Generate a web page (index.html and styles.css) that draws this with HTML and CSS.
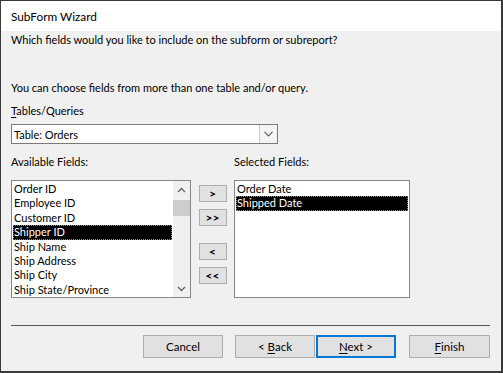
FILE: index.html
```html
<!DOCTYPE html>
<html lang="en">
<head>
<meta charset="UTF-8">
<meta name="viewport" content="width=device-width, initial-scale=1.0">
<title>SubForm Wizard</title>
<link rel="stylesheet" href="styles.css">
</head>
<body>

<div class="window">
    <div class="titlebar">SubForm Wizard</div>
    <div class="content">
        <p class="question">Which fields would you like to include on the subform or subreport?</p>
        <p class="hint">You can choose fields from more than one table and/or query.</p>

        <div class="field-label"><u>T</u>ables/Queries</div>
        <div class="combo">
            <span class="combo-text">Table: Orders</span>
            <span class="combo-btn">
                <svg width="9" height="6" viewBox="0 0 9 6"><path d="M0.5 0.8 L4.5 4.8 L8.5 0.8" fill="none" stroke="#606060" stroke-width="1.2"/></svg>
            </span>
        </div>

        <div class="pickers">
            <div class="column column-available">
                <div class="field-label">Available Fields:</div>
                <div class="listbox">
                    <div class="items">
                        <div class="item">Order ID</div>
                        <div class="item">Employee ID</div>
                        <div class="item">Customer ID</div>
                        <div class="item selected">Shipper ID</div>
                        <div class="item">Ship Name</div>
                        <div class="item">Ship Address</div>
                        <div class="item">Ship City</div>
                        <div class="item">Ship State/Province</div>
                    </div>
                    <div class="scrollbar">
                        <span class="arrow">
                            <svg width="9" height="6" viewBox="0 0 9 6"><path d="M1 5 L4.5 1.5 L8 5" fill="none" stroke="#606060" stroke-width="1.3"/></svg>
                        </span>
                        <span class="track"><span class="thumb"></span></span>
                        <span class="arrow">
                            <svg width="9" height="6" viewBox="0 0 9 6"><path d="M1 1 L4.5 4.5 L8 1" fill="none" stroke="#606060" stroke-width="1.3"/></svg>
                        </span>
                    </div>
                </div>
            </div>

            <div class="movers">
                <button class="btn-small">&gt;</button>
                <button class="btn-small">&gt;&gt;</button>
                <button class="btn-small gap">&lt;</button>
                <button class="btn-small">&lt;&lt;</button>
            </div>

            <div class="column column-selected">
                <div class="field-label">Selected Fields:</div>
                <div class="listbox">
                    <div class="items">
                        <div class="item">Order Date</div>
                        <div class="item selected">Shipped Date</div>
                    </div>
                </div>
            </div>
        </div>

        <div class="separator"></div>

        <div class="actions">
            <button class="btn">Cancel</button>
            <button class="btn back">&lt; <u>B</u>ack</button>
            <button class="btn default"><u>N</u>ext &gt;</button>
            <button class="btn finish"><u>F</u>inish</button>
        </div>
    </div>
</div>

</body>
</html>
```

FILE: styles.css
```css
body {
    margin: 0;
    font-family: Lato, "Noto Sans", sans-serif;
    font-size: 11px;
    color: #000;
}
.window {
    width: 503px;
    height: 373px;
    box-sizing: border-box;
    border: 1px solid #3a3a3a;
    border-right-width: 2px;
    border-bottom-width: 2px;
    background-color: #f0f0f0;
    display: flex;
    flex-direction: column;
}
.titlebar {
    height: 30px;
    background-color: #fff;
    padding-left: 10px;
    line-height: 31px;
    font-size: 11.8px;
}
.content {
    padding: 1px 11px 0 10px;
    display: flex;
    flex-direction: column;
}
p {
    margin: 0;
    line-height: 16px;
}
.question {
    margin-bottom: 32px;
}
.hint {
    margin-bottom: 7px;
}
.field-label {
    line-height: 16px;
}
u {
    text-decoration-thickness: 1px;
    text-underline-offset: 2px;
}
.combo {
    margin-top: 5px;
    width: 267px;
    height: 20px;
    box-sizing: border-box;
    border: 1px solid #7a7a7a;
    background-color: #fff;
    display: flex;
    align-items: center;
}
.combo-text {
    flex: 1;
    padding-left: 2px;
}
.combo-btn {
    width: 18px;
    height: 18px;
    box-sizing: border-box;
    border-left: 1px solid #cdcdcd;
    background-color: #f4f4f4;
    display: flex;
    align-items: center;
    justify-content: center;
}
.pickers {
    margin-top: 10px;
    display: flex;
}
.column .field-label {
    margin-bottom: 10px;
}
.column-available {
    width: 180px;
}
.column-selected {
    width: 176px;
}
.listbox {
    height: 118px;
    box-sizing: border-box;
    border: 1px solid #828790;
    background-color: #fff;
    display: flex;
}
.items {
    flex: 1;
    padding: 1px 1px 0 1px;
}
.item {
    height: 14.4px;
    line-height: 14px;
    padding-left: 1px;
    white-space: nowrap;
}
.item.selected {
    background-color: #000;
    color: #fff;
    outline: 1px dotted #888;
    outline-offset: -1px;
}
.scrollbar {
    width: 17px;
    background-color: #f0f0f0;
    display: flex;
    flex-direction: column;
}
.arrow {
    height: 17px;
    display: flex;
    align-items: center;
    justify-content: center;
}
.track {
    flex: 1;
    padding-top: 2px;
}
.thumb {
    display: block;
    height: 16px;
    background-color: #cdcdcd;
}
.movers {
    width: 43px;
    padding-top: 31px;
    display: flex;
    flex-direction: column;
    align-items: center;
    gap: 7px;
}
.movers .gap {
    margin-top: 10px;
}
button {
    font-family: inherit;
    font-size: 11px;
    color: #000;
    background-color: #e1e1e1;
    border: 1px solid #adadad;
    margin: 0;
    padding: 0;
}
.btn-small {
    width: 28px;
    height: 17px;
    line-height: 14px;
    font-weight: bold;
    font-size: 12px;
}
.separator {
    margin-top: 27px;
    height: 1px;
    width: 479px;
    background-color: #555;
}
.actions {
    margin-top: 9px;
    display: flex;
    justify-content: flex-end;
}
.btn {
    width: 80px;
    height: 23px;
    font-size: 11.5px;
}
.btn.back {
    margin-left: 12px;
}
.btn.default {
    margin-left: 1px;
    border-color: #0078d7;
    box-shadow: inset 0 0 0 1px #0078d7;
}
.btn.finish {
    width: 81px;
    margin-left: 13px;
}
```
